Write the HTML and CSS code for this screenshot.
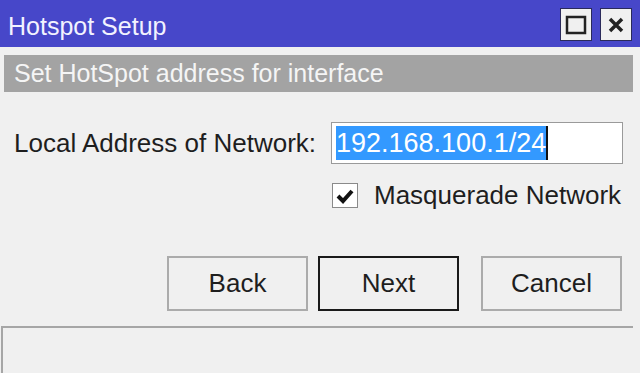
FILE: index.html
```html
<!DOCTYPE html>
<html lang="en">
<head>
    <meta charset="UTF-8">
    <title>Hotspot Setup</title>
    <link rel="stylesheet" href="styles.css">
</head>
<body>

    <div class="titlebar">
        <span class="title">Hotspot Setup</span>
        <div class="win-buttons">
            <span class="win-btn">
                <svg width="22" height="22" viewBox="0 0 22 22"><rect x="2" y="3" width="18" height="16" fill="none" stroke="#222" stroke-width="2.5"/></svg>
            </span>
            <span class="win-btn">
                <svg width="20" height="20" viewBox="0 0 20 20"><path d="M4 4 L16 16 M16 4 L4 16" stroke="#222" stroke-width="3.5"/></svg>
            </span>
        </div>
    </div>

    <div class="content">
        <div class="banner">Set HotSpot address for interface</div>

        <div class="row">
            <label class="field-label">Local Address of Network:</label>
            <div class="field"><span class="selected">192.168.100.1/24</span><span class="caret"></span></div>
        </div>

        <div class="row check-row">
            <span class="checkbox">
                <svg width="18" height="16" viewBox="0 0 18 16"><path d="M2 8 L7 13 L16 3" fill="none" stroke="#111" stroke-width="4"/></svg>
            </span>
            <span class="check-label">Masquerade Network</span>
        </div>

        <div class="buttons">
            <button class="btn">Back</button>
            <button class="btn default">Next</button>
            <button class="btn cancel">Cancel</button>
        </div>

        <div class="statusbar"></div>
    </div>

</body>
</html>
```

FILE: styles.css
```css
body {
    margin: 0;
    font-family: 'Liberation Sans', Arial, sans-serif;
    background-color: #f0f0f0;
    color: #1e1e1e;
    width: 640px;
    height: 373px;
    overflow: hidden;
}
.titlebar {
    height: 47px;
    background-color: #4747c9;
    display: flex;
    align-items: center;
    justify-content: space-between;
    padding: 0 8px;
}
.title {
    color: #f2f2ff;
    font-size: 25px;
    margin-top: 6px;
}
.win-buttons {
    display: flex;
    gap: 8px;
    margin-top: 2px;
}
.win-btn {
    width: 30px;
    height: 31px;
    background-color: #f0f0f0;
    border: 1px solid #2a2a5a;
    display: flex;
    align-items: center;
    justify-content: center;
}
.content {
    width: 633px;
    padding-top: 8px;
}
.banner {
    margin-left: 4px;
    height: 37px;
    line-height: 37px;
    background-color: #a3a3a3;
    color: #f5f5f5;
    font-size: 25px;
    padding-left: 10px;
}
.row {
    display: flex;
    align-items: center;
    margin-top: 30px;
}
.field-label {
    font-size: 26px;
    margin-left: 14px;
    width: 317px;
}
.field {
    width: 282px;
    height: 34px;
    padding: 3px 4px;
    border: 1px solid #9a9a9a;
    background-color: #fff;
    display: flex;
    align-items: center;
}
.selected {
    background-color: #3399ff;
    color: #fff;
    font-size: 27px;
    line-height: 34px;
}
.caret {
    width: 2px;
    height: 34px;
    background-color: #111;
}
.check-row {
    margin-top: 16px;
}
.checkbox {
    margin-left: 332px;
    width: 24px;
    height: 23px;
    border: 1px solid #8a8a8a;
    background-color: #fff;
    display: flex;
    align-items: center;
    justify-content: center;
}
.check-label {
    font-size: 26px;
    margin-left: 16px;
}
.buttons {
    display: flex;
    margin-top: 45px;
    padding-left: 167px;
    gap: 10px;
}
.btn {
    width: 141px;
    height: 55px;
    background-color: #f0f0f0;
    border: 2px solid #ababab;
    font-family: 'Liberation Sans', Arial, sans-serif;
    font-size: 26px;
    color: #1e1e1e;
}
.btn.default {
    border-color: #1a1a1a;
}
.btn.cancel {
    margin-left: 12px;
}
.statusbar {
    margin-top: 15px;
    height: 48px;
    border-top: 2px solid #a6a6a6;
    border-left: 2px solid #a6a6a6;
    margin-left: 1px;
}
```
